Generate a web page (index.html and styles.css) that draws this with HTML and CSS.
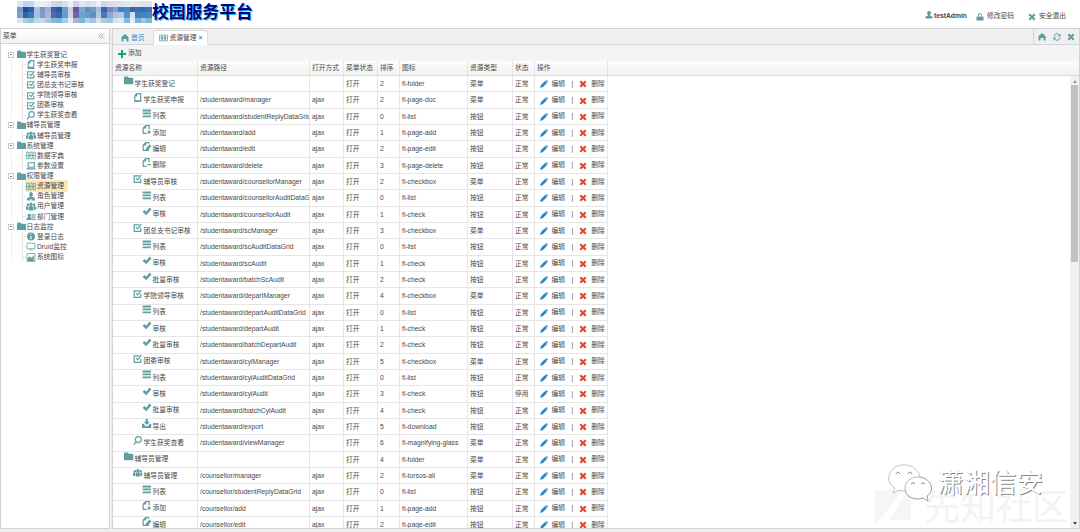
FILE: index.html
```html
<!DOCTYPE html>
<html lang="zh-CN">
<head>
    <meta charset="UTF-8">
    <title>校园服务平台</title>
    <link rel="stylesheet" href="styles.css">
</head>
<body>
    <!-- 图标 -->
    <svg class="sprite">
        <symbol id="folder" viewBox="0 0 16 16"><path d="M0 3q0-2 2-2h4l2 2h6q2 0 2 2v9H0z"/></symbol>
        <symbol id="page" viewBox="0 0 16 16"><path class="line" d="M6 1h7v14H3V5zM6 1v4H3M3 13h10"/></symbol>
        <symbol id="page-add" viewBox="0 0 16 16"><path class="line" d="M12 7V1H6L2 5v9h6M6 1v4H2M12 9v6M9 12h6"/></symbol>
        <symbol id="page-edit" viewBox="0 0 16 16"><path class="line" d="M11 3V1H6L2 5v9h9v-3M6 1v4H2"/><path d="M13 4l3 3-6 6-4 1 1-4z"/></symbol>
        <symbol id="page-delete" viewBox="0 0 16 16"><path class="line" d="M12 7V1H6L2 5v9h6M6 1v4H2M9 11h6"/></symbol>
        <symbol id="checkbox" viewBox="0 0 16 16"><path class="line" d="M13 8v6H2V3h9"/><path class="line" d="M5 7l3 3 6-8"/></symbol>
        <symbol id="list" viewBox="0 0 16 16"><path d="M1 1h14v3H1zM1 6h14v3H1zM1 11h14v3H1z"/></symbol>
        <symbol id="check" viewBox="0 0 16 16"><path d="M1 8l3-3 3 3 6-7 3 3-9 10z"/></symbol>
        <symbol id="download" viewBox="0 0 16 16"><path d="M6 0h4v5h3L8 10 3 5h3zM0 8h3l3 4h4l3-4h3v7H0z"/></symbol>
        <symbol id="search" viewBox="0 0 16 16"><circle class="line" cx="9" cy="6" r="5"/><path class="line" d="M5 10l-4 5"/></symbol>
        <symbol id="group" viewBox="0 0 18 16"><circle cx="9" cy="4" r="3"/><circle cx="3.500" cy="5" r="2.300"/><circle cx="14.500" cy="5" r="2.300"/><path d="M5 15V9l2-2h4l2 2v6zM0 14V9l2-2h2v7zM14 14V7h2l2 2v5z"/></symbol>
        <symbol id="torso" viewBox="0 0 16 16"><circle cx="8" cy="4" r="4"/><path d="M6 6h4v3l5 2v4H1v-4l5-2z"/></symbol>
        <symbol id="role" viewBox="0 0 16 16"><path d="M8 0a3 3 0 013 3v4l-2 2h2l4 2v4H9v-3H7v3H1v-4l4-2h2L5 7V3a3 3 0 013-3z"/></symbol>
        <symbol id="dept" viewBox="0 0 16 16"><circle cx="5" cy="6" r="3"/><path d="M0 14v-3l3-2h4l2 2v3zM9 4h7v2H9zM9 8h7v2H9zM10 12h6v2h-6z"/></symbol>
        <symbol id="table" viewBox="0 0 18 14"><path class="thin" d="M1 1h4v12H1zM7 1h4v12H7zM13 1h4v12h-4zM1 7h16"/></symbol>
        <symbol id="laptop" viewBox="0 0 16 16"><path class="line" d="M3 3h11v8H3zM0 14h16"/></symbol>
        <symbol id="monitor" viewBox="0 0 16 16"><path class="thin" d="M1 2h14v10H1zM5 14h6"/></symbol>
        <symbol id="info" viewBox="0 0 16 16"><circle cx="8" cy="8" r="7"/><path class="cut" d="M8 3v2M8 7v6"/></symbol>
        <symbol id="chart" viewBox="0 0 16 16"><path class="thin" d="M1 1h14v14H1z"/><path d="M2 14V9l4-3 3 3 4-5v10z"/></symbol>
        <symbol id="home" viewBox="0 0 16 16"><path d="M8 0l7 6v9h-4v-5H5v5H1V6z"/></symbol>
        <symbol id="lock" viewBox="0 0 16 16"><path class="line" d="M5 7V4a3 3 0 016 0v1"/><path d="M1 7h14v8H1z"/></symbol>
        <symbol id="cross" viewBox="0 0 16 16"><path d="M1 4l3-3 4 4 4-4 3 3-4 4 4 4-3 3-4-4-4 4-3-3 4-4z"/></symbol>
        <symbol id="refresh" viewBox="0 0 16 16"><path class="line" d="M2 7a6 6 0 0110-4M14 9a6 6 0 01-10 4"/><path d="M15 1v6H9zM1 15V9h6z"/></symbol>
        <symbol id="plus" viewBox="0 0 16 16"><path d="M6 0h4v6h6v4h-6v6H6v-6H0V6h6z"/></symbol>
        <symbol id="pencil" viewBox="0 0 16 16"><path d="M11 2l2-2 3 3-2 2zM10 2l4 4-8 8-6 2 2-6z"/></symbol>
    </svg>

    <div class="header">
        <div class="mosaic"></div>
        <h1 class="title">校园服务平台</h1>
        <div class="user">
            <span class="user-name"><svg class="icon"><use href="#torso"/></svg>testAdmin</span>
            <span class="user-pwd"><svg class="icon"><use href="#lock"/></svg>修改密码</span>
            <span class="user-exit"><svg class="icon"><use href="#cross"/></svg>安全退出</span>
        </div>
    </div>

    <div class="layout">
        <div class="west">
            <div class="panel-title"><span>菜单</span><svg class="fold" viewBox="0 0 8 8"><path d="M4 1L1 4l3 3M7 1L4 4l3 3"/></svg></div>
            <div class="tree"></div>
        </div>
        <div class="center">
            <div class="tabs">
                <div class="tab tab-home"><svg class="icon"><use href="#home"/></svg>首页</div>
                <div class="tab tab-on"><svg class="icon"><use href="#table"/></svg>资源管理<b class="close">×</b></div>
                <div class="tab-tools">
                    <svg class="icon"><use href="#home"/></svg>
                    <svg class="icon"><use href="#refresh"/></svg>
                    <svg class="icon"><use href="#cross"/></svg>
                </div>
            </div>
            <div class="toolbar"><svg class="icon"><use href="#plus"/></svg>添加</div>
            <div class="grid-head">
                <div class="row head">
                    <div>资源名称</div><div>资源路径</div><div>打开方式</div><div>菜单状态</div><div>排序</div><div>图标</div><div>资源类型</div><div>状态</div><div>操作</div>
                </div>
            </div>
            <div class="grid-body">
                <div class="rows"></div>
                <div class="scrollbar"><i class="up"></i><div class="thumb"></div><i class="down"></i></div>
            </div>
        </div>
    </div>

    <!-- 水印 -->
    <div class="mark-back">
        <svg viewBox="0 0 36 36"><path d="M0 0h28L0 36zM33 0h3v30H14z"/></svg><span>先知社区</span>
    </div>
    <div class="mark-front">
        <svg viewBox="0 0 46 40">
            <path d="M17 2C8 2 2 8 2 15c0 5 2 8 6 10l-2 5 6-3c10 3 22-2 21-12C32 7 25 2 17 2z"/>
            <path class="bubble" d="M31 14c-8 0-13 5-13 11 0 8 8 13 18 10l5 3-1-5c9-6 3-19-9-19z"/>
            <path class="eye" d="M9 11q2-4 4 0M21 11q2-4 4 0M24 21q2-3 4 0M34 21q2-3 4 0"/>
        </svg><span>潇湘信安</span>
    </div>

    <script>
        function icon(name){
            return `<svg class="icon"><use href="#${name}"/></svg>`
        }

        //左侧菜单：层级、图标、文字
        const menu = [
            [0,'folder','学生获奖登记'],[1,'page','学生获奖申报'],[1,'checkbox','辅导员审核'],[1,'checkbox','团总支书记审核'],
            [1,'checkbox','学院领导审核'],[1,'checkbox','团委审核'],[1,'search','学生获奖查看'],
            [0,'folder','辅导员管理'],[1,'group','辅导员管理'],
            [0,'folder','系统管理'],[1,'table','数据字典'],[1,'laptop','参数设置'],
            [0,'folder','权限管理'],[1,'table','资源管理'],[1,'role','角色管理'],[1,'group','用户管理'],[1,'dept','部门管理'],
            [0,'folder','日志监控'],[1,'info','登录日志'],[1,'monitor','Druid监控'],[1,'chart','系统图标']
        ]
        document.querySelector('.tree').innerHTML = menu.map(function(m){
            const on = m[2] === '资源管理' ? ' on' : ''
            const box = m[0] ? '<i class="branch"></i>' : '<i class="expander"></i>'
            return `<div class="node level${m[0]}">${box}<span class="label${on}">${icon(m[1])}${m[2]}</span></div>`
        }).join('')

        //表格：层级、图标、名称、路径、排序、图标名、状态
        const s = '/studentaward/', c = '/counsellor/'
        const list = [
            [1,'folder','学生获奖登记','',2,'folder'],
            [2,'page','学生获奖申报',s+'manager',2,'page-doc'],
            [3,'list','列表',s+'studentReplyDataGrid',0,'list'],
            [3,'page-add','添加',s+'add',1,'page-add'],
            [3,'page-edit','编辑',s+'edit',2,'page-edit'],
            [3,'page-delete','删除',s+'delete',3,'page-delete'],
            [2,'checkbox','辅导员审核',s+'counsellorManager',2,'checkbox'],
            [3,'list','列表',s+'counsellorAuditDataGrid',0,'list'],
            [3,'check','审核',s+'counsellorAudit',1,'check'],
            [2,'checkbox','团总支书记审核',s+'scManager',3,'checkbox'],
            [3,'list','列表',s+'scAuditDataGrid',0,'list'],
            [3,'check','审核',s+'scAudit',1,'check'],
            [3,'check','批量审核',s+'batchScAudit',2,'check'],
            [2,'checkbox','学院领导审核',s+'departManager',4,'checkbox'],
            [3,'list','列表',s+'departAuditDataGrid',0,'list'],
            [3,'check','审核',s+'departAudit',1,'check'],
            [3,'check','批量审核',s+'batchDepartAudit',2,'check'],
            [2,'checkbox','团委审核',s+'cylManager',5,'checkbox'],
            [3,'list','列表',s+'cylAuditDataGrid',0,'list'],
            [3,'check','审核',s+'cylAudit',3,'check','停用'],
            [3,'check','批量审核',s+'batchCylAudit',4,'check'],
            [3,'download','导出',s+'export',5,'download'],
            [2,'search','学生获奖查看',s+'viewManager',6,'magnifying-glass'],
            [1,'folder','辅导员管理','',4,'folder'],
            [2,'group','辅导员管理',c+'manager',2,'torsos-all'],
            [3,'list','列表',c+'studentReplyDataGrid',0,'list'],
            [3,'page-add','添加',c+'add',1,'page-add'],
            [3,'page-edit','编辑',c+'edit',2,'page-edit']
        ]
        document.querySelector('.rows').innerHTML = list.map(function(r){
            const open = r[3] && r[5] !== 'magnifying-glass' ? 'ajax' : ''
            return `<div class="row">
                <div class="name name${r[0]}">${icon(r[1])}${r[2]}</div><div>${r[3]}</div><div>${open}</div><div>打开</div>
                <div>${r[4]}</div><div>fi-${r[5]}</div><div>${r[0] === 3 ? '按钮' : '菜单'}</div><div>${r[6] || '正常'}</div>
                <div class="ops"><span class="edit">${icon('pencil')}编辑</span><span class="sep">|</span><span class="del">${icon('cross')}删除</span></div>
            </div>`
        }).join('')

        //标题前的色块
        const colors = [
            'dce8f2 c2d3e8 c2d8eb e3edf5 ebeff6 e3e9f2 d3d8e9 c7d4e8 d5e2ee f1eef5 d3cfe4 dde7f3 d2e1ef d9e3f1 e8eef6 c9d7e9 d7dcec dde2ef dae6f1 dfe9f3 e4eaf3 e2e8f2 d9e5f1 d8e5f0',
            '6d9cc9 274b98 2c60a9 a5c3de 7f96c5 9fb0d5 4b5da2 285aa5 64a0c9 cfcde3 6058a4 79a8d3 5b8dc1 7496c8 a7bddd 3865ad 7787bf 899bcd 3f80b9 478bc0 3a64a9 456ab0 2e70b0 3877b3',
            '75a5cf 3760a5 3c79b7 a2bfdd 8599c8 a7b7d9 6860a5 3764aa 5f9dcb d5d2e6 6c65ac 6ca4ce 6e9aca 608bc3 b3c8e1 4e77b7 8ca6d1 b1c0df b0cce3 4f94c5 d4e0ee 447eb9 4a83bb 4589bf',
            'd4e5f1 a6cce3 92c3df bdd8e9 c7d8ea a7c9e2 8eb5d8 76b5d9 9fd0e5 e6e8f2 a7b4d8 78b6d9 b1d3e7 a2c5df d5e2ef b0c9e2 9bc7e1 d4e2ef dce8f2 7fbbdc e0edf5 73b4d8 9acae1 7cb8da'
        ]
        document.querySelector('.mosaic').innerHTML = colors.join(' ').split(' ').map(function(v){
            return `<i style="background:#${v}"></i>`
        }).join('')
    </script>
</body>
</html>
```
FILE: styles.css
```css
*{
    box-sizing: border-box;
}
body{
    margin: 0;
    width: 1080px;
    height: 532px;
    overflow: hidden;
    background: #eee;
    color: #484848;
    font: 6.75px/10px "Liberation Sans","Noto Sans CJK SC",sans-serif;
    position: relative;
}
.sprite{
    display: none;
}
.icon{
    width: 8px;
    height: 8px;
    fill: #5f9ea0;
    stroke: none;
    color: #5f9ea0;
    flex: none;
}
.line,.thin{
    fill: none;
    stroke: #5f9ea0;
    stroke-width: 2;
}
.thin{
    stroke-width: 1.4;
}
.cut{
    stroke: #fff;
    stroke-width: 2;
}

/* 头部 */
.header{
    height: 28px;
    background: #fff;
    display: flex;
    align-items: flex-start;
    padding: 1px 14px 0 17px;
}
.mosaic{
    width: 135px;
    height: 22px;
    display: grid;
    grid-template-columns: repeat(24,1fr);
    grid-template-rows: repeat(4,1fr);
}
.title{
    margin: 0;
    font-size: 16.8px;
    line-height: 24px;
    color: #000080;
    text-shadow: 1px 1px 0 #2cc4ee;
}
.user{
    margin-left: auto;
    display: flex;
    padding-top: 10px;
}
.user span{
    display: flex;
    align-items: center;
}
.user-name{
    font-weight: bold;
}
.user-name .icon{
    margin: -3px 1px 0 0;
}
.user-pwd{
    margin-left: 9px;
}
.user-exit{
    margin-left: 14px;
}
.user-pwd .icon,.user-exit .icon{
    margin: 2px 3px 0 0;
}

.layout{
    display: flex;
    height: 501px;
}
/* 左侧 */
.west{
    width: 110px;
    border: 1px solid #d4d4d4;
    background: #fff;
}
.panel-title{
    height: 15px;
    padding: 0 4px 0 2px;
    display: flex;
    justify-content: space-between;
    align-items: center;
    border-bottom: 1px solid #d4d4d4;
    background: linear-gradient(#fff,#f2f2f2);
}
.fold{
    width: 7px;
    height: 8px;
    fill: none;
    stroke: #6aaede;
}
.tree{
    padding: 5.5px 0 0 7px;
}
.node{
    height: 10.13px;
    display: flex;
    align-items: center;
}
.level0 .icon{
    width: 9px;
    height: 9px;
    margin-right: 1px;
}
.level0 .label{
    padding-left: 1.5px;
}
.level1 .icon{
    width: 10px;
    height: 9px;
    margin-right: 1px;
}
.label{
    display: flex;
    align-items: center;
    height: 10px;
    white-space: nowrap;
}
.on{
    background: #ffe6b0;
    padding-right: 3px;
    box-shadow: 0 0 0 0.5px #f5d48c;
}
.expander{
    width: 6px;
    height: 6px;
    border: 1px solid #c3ccd3;
    background: linear-gradient(#777,#777) center/2px 1px no-repeat;
    margin-right: 1px;
}
.branch{
    width: 15px;
    height: 10px;
    margin: 0 0 0 3px;
    border-left: 1px dotted #e4e4e4;
    background: linear-gradient(#e2e2e2,#e2e2e2) right center/4px 1px no-repeat,linear-gradient(#e8e8e8,#e8e8e8) 10px 0/1px 100% no-repeat;
}

/* 右侧 */
.center{
    flex: 1;
    margin-left: 2px;
    border: 1px solid #d4d4d4;
    background: #fff;
    display: flex;
    flex-direction: column;
    min-width: 0;
}
.tabs{
    height: 16px;
    flex: none;
    background: #f0f0f0;
    border-bottom: 1px solid #d4d4d4;
    display: flex;
    padding: 1px 0 0 1px;
}
.tab{
    height: 15px;
    display: flex;
    align-items: center;
}
.tab-home{
    width: 39px;
    padding-left: 7px;
    color: #2a8fcf;
}
.tab-home .icon{
    margin-right: 2px;
}
.tab-on{
    width: 55px;
    padding-left: 5px;
    background: #fff;
    border: 1px solid #ddd;
    border-bottom: none;
    border-radius: 3px 3px 0 0;
}
.tab-on .icon{
    width: 9px;
    margin-right: 1.5px;
}
.close{
    margin-left: 2px;
    color: #4b86d6;
}
.tab-tools{
    margin: -1px 0 0 auto;
    width: 46px;
    border-left: 1px solid #d4d4d4;
    display: flex;
    align-items: center;
    justify-content: space-between;
    padding: 0 4px;
}
.toolbar{
    height: 16px;
    flex: none;
    background: #f4f4f4;
    display: flex;
    align-items: center;
    padding-left: 5px;
}
.toolbar .icon{
    fill: #12a560;
    margin: 1px 2px 0 0;
}
.grid-head{
    height: 15px;
    flex: none;
    background: linear-gradient(#fdfdfd,#f1f1f1);
    border-bottom: 1px solid #ddd;
}
.row{
    display: grid;
    grid-template-columns: 85px 112px 34px 34px 22px 68px 45px 22px 73px;
    width: 495px;
    height: 16.33px;
}
.row > div{
    border-right: 1px solid #e6e6e6;
    border-bottom: 1px solid #e6e6e6;
    padding: 0 0 0 2px;
    line-height: 16px;
    white-space: nowrap;
    overflow: hidden;
}
.head{
    height: 14px;
}
.head > div{
    line-height: 14px;
    border-bottom: none;
}
.row .name{
    display: flex;
    align-items: center;
}
.name .icon{
    margin: -5px 1px 0 0;
    width: 9.5px;
    height: 9.5px;
}
.row .name1{
    padding-left: 11px;
}
.row .name2{
    padding-left: 20px;
}
.row .name3{
    padding-left: 29px;
}
.row .ops{
    display: flex;
    align-items: center;
    padding-left: 5px;
}
.ops span{
    display: flex;
    align-items: center;
}
.ops .sep{
    margin: 0 6px 0 6.5px;
}
.ops .icon{
    margin-top: 1px;
}
.edit .icon{
    fill: #3185c5;
    margin-right: 3.5px;
}
.del .icon{
    fill: #df4632;
    margin-right: 4px;
}
.grid-body{
    flex: 1;
    min-height: 0;
    display: flex;
    justify-content: space-between;
    overflow: hidden;
}
.scrollbar{
    width: 9px;
    background: #f1f1f1;
    display: flex;
    flex-direction: column;
    align-items: center;
}
.up,.down{
    border: 2px solid transparent;
    margin-top: 2px;
}
.up{
    border-bottom: 3px solid #999;
}
.thumb{
    width: 7px;
    height: 177px;
    margin-top: 2px;
    background: #c1c1c1;
}
.down{
    border-top: 3px solid #505050;
    margin: auto 0 1px;
}

/* 水印浮在页面上 */
.mark-back,.mark-front{
    position: absolute;
    display: flex;
    align-items: center;
    white-space: nowrap;
}
.mark-back{
    left: 875px;
    top: 490px;
    color: #f3f3f3;
    font-size: 36px;
    line-height: 36px;
}
.mark-back svg{
    width: 36px;
    height: 36px;
    fill: #f6f6f6;
    margin-right: 13px;
}
.mark-front{
    left: 887px;
    top: 463px;
    color: #fff;
    font-size: 26.5px;
    line-height: 40px;
    text-shadow: 1px 1px 0.5px #888;
}
.mark-front svg{
    width: 46px;
    height: 40px;
    margin-right: 4px;
    fill: #fff;
    stroke: #d8d8d8;
    stroke-width: 0.7;
    filter: drop-shadow(0.5px 0.7px 0.4px #777);
}
.mark-front .bubble{
    stroke: #999;
}
.mark-front .eye{
    fill: none;
    stroke: #888;
    stroke-width: 1;
}
```
